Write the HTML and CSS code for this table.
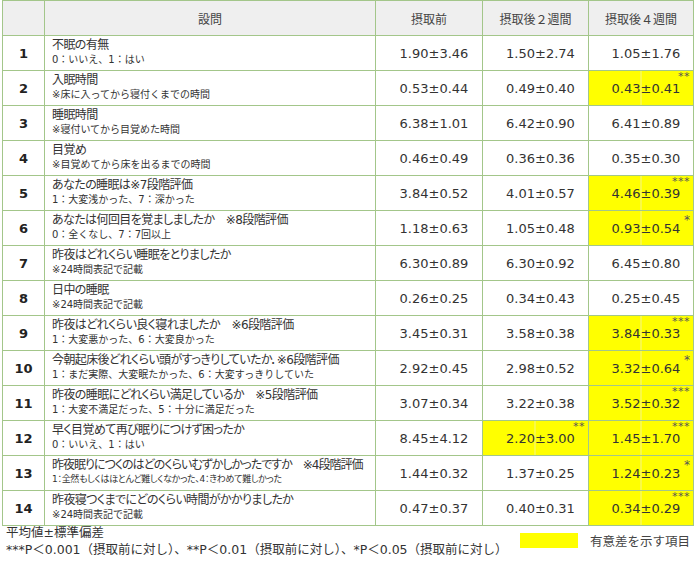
FILE: index.html
```html
<!DOCTYPE html>
<html lang="ja">
<head>
<meta charset="utf-8">
<link rel="stylesheet" href="styles.css">
</head>
<body>
<div class="page">
<table class="tbl">
  <colgroup>
    <col class="c-no"><col class="c-q"><col class="c-v"><col class="c-v2"><col class="c-v3">
  </colgroup>
  <thead>
    <tr><th></th><th>設問</th><th>摂取前</th><th>摂取後２週間</th><th>摂取後４週間</th></tr>
  </thead>
  <tbody>
    <tr><td class="no">1</td><td class="q"><div class="m">不眠の有無</div><div class="s">0：いいえ、1：はい</div></td><td class="v">1.90±3.46</td><td class="v">1.50±2.74</td><td class="v">1.05±1.76</td></tr>
    <tr><td class="no">2</td><td class="q"><div class="m">入眠時間</div><div class="s">※床に入ってから寝付くまでの時間</div></td><td class="v">0.53±0.44</td><td class="v">0.49±0.40</td><td class="v y">0.43±0.41<span class="ast">**</span></td></tr>
    <tr><td class="no">3</td><td class="q"><div class="m">睡眠時間</div><div class="s">※寝付いてから目覚めた時間</div></td><td class="v">6.38±1.01</td><td class="v">6.42±0.90</td><td class="v">6.41±0.89</td></tr>
    <tr><td class="no">4</td><td class="q"><div class="m">目覚め</div><div class="s">※目覚めてから床を出るまでの時間</div></td><td class="v">0.46±0.49</td><td class="v">0.36±0.36</td><td class="v">0.35±0.30</td></tr>
    <tr><td class="no">5</td><td class="q"><div class="m">あなたの睡眠は※7段階評価</div><div class="s">1：大変浅かった、7：深かった</div></td><td class="v">3.84±0.52</td><td class="v">4.01±0.57</td><td class="v y">4.46±0.39<span class="ast">***</span></td></tr>
    <tr><td class="no">6</td><td class="q"><div class="m">あなたは何回目を覚ましましたか　※8段階評価</div><div class="s">0：全くなし、7：7回以上</div></td><td class="v">1.18±0.63</td><td class="v">1.05±0.48</td><td class="v y">0.93±0.54<span class="ast one">*</span></td></tr>
    <tr><td class="no">7</td><td class="q"><div class="m">昨夜はどれくらい睡眠をとりましたか</div><div class="s">※24時間表記で記載</div></td><td class="v">6.30±0.89</td><td class="v">6.30±0.92</td><td class="v">6.45±0.80</td></tr>
    <tr><td class="no">8</td><td class="q"><div class="m">日中の睡眠</div><div class="s">※24時間表記で記載</div></td><td class="v">0.26±0.25</td><td class="v">0.34±0.43</td><td class="v">0.25±0.45</td></tr>
    <tr><td class="no">9</td><td class="q"><div class="m">昨夜はどれくらい良く寝れましたか　※6段階評価</div><div class="s">1：大変悪かった、6：大変良かった</div></td><td class="v">3.45±0.31</td><td class="v">3.58±0.38</td><td class="v y">3.84±0.33<span class="ast">***</span></td></tr>
    <tr><td class="no">10</td><td class="q"><div class="m">今朝起床後どれくらい頭がすっきりしていたか．※6段階評価</div><div class="s">1：まだ実際、大変眠たかった、6：大変すっきりしていた</div></td><td class="v">2.92±0.45</td><td class="v">2.98±0.52</td><td class="v y">3.32±0.64<span class="ast one">*</span></td></tr>
    <tr><td class="no">11</td><td class="q"><div class="m">昨夜の睡眠にどれくらい満足しているか　※5段階評価</div><div class="s">1：大変不満足だった、5：十分に満足だった</div></td><td class="v">3.07±0.34</td><td class="v">3.22±0.38</td><td class="v y">3.52±0.32<span class="ast">***</span></td></tr>
    <tr><td class="no">12</td><td class="q"><div class="m">早く目覚めて再び眠りにつけず困ったか</div><div class="s">0：いいえ、1：はい</div></td><td class="v">8.45±4.12</td><td class="v y">2.20±3.00<span class="ast">**</span></td><td class="v y">1.45±1.70<span class="ast">***</span></td></tr>
    <tr><td class="no">13</td><td class="q"><div class="m tight">昨夜眠りにつくのはどのくらいむずかしかったですか　※4段階評価</div><div class="s small">1：全然もしくはほとんど難しくなかった、4：きわめて難しかった</div></td><td class="v">1.44±0.32</td><td class="v">1.37±0.25</td><td class="v y">1.24±0.23<span class="ast one">*</span></td></tr>
    <tr><td class="no">14</td><td class="q"><div class="m">昨夜寝つくまでにどのくらい時間がかかりましたか</div><div class="s">※24時間表記で記載</div></td><td class="v">0.47±0.37</td><td class="v">0.40±0.31</td><td class="v y">0.34±0.29<span class="ast">***</span></td></tr>
  </tbody>
</table>
<div class="foot">
  <div class="notes">
    <div>平均値±標準偏差</div>
    <div>***P＜0.001（摂取前に対し）、**P＜0.01（摂取前に対し）、*P＜0.05（摂取前に対し）</div>
  </div>
  <div class="legend"><span class="swatch"></span><span class="ltext">有意差を示す項目</span></div>
</div>
</div>
</body>
</html>
```

FILE: styles.css
```css
html, body {
  margin: 0;
  padding: 0;
  background: #ffffff;
}
.page {
  width: 700px;
  padding-left: 2px;
  box-sizing: border-box;
  font-family: "DejaVu Sans", "Noto Sans CJK JP", sans-serif;
  color: #333333;
}
.tbl {
  border-collapse: collapse;
  table-layout: fixed;
  width: 691px;
}
.c-no { width: 42px; }
.c-q { width: 331px; }
.c-v { width: 107px; }
.c-v2 { width: 106px; }
.c-v3 { width: 105px; }
.tbl th, .tbl td {
  border: 1px solid #a3c68a;
  padding: 0;
  height: 34px;
  box-sizing: border-box;
}
.tbl thead tr { height: 35px; }
.tbl tbody tr { height: 35px; }
.tbl th {
  background: #efefef;
  font-family: "Noto Sans CJK JP", sans-serif;
  font-weight: normal;
  font-size: 12px;
  text-align: center;
  color: #444;
}
.no {
  text-align: center;
  font-weight: bold;
  font-size: 13px;
  color: #222;
}
.q {
  padding-left: 7px !important;
  white-space: nowrap;
  overflow: hidden;
}
.m {
  font-size: 12px;
  letter-spacing: -0.6px;
  line-height: 15px;
  color: #333;
  font-feature-settings: "palt";
}
.m.tight {
  letter-spacing: -1px;
}
.s {
  font-size: 10px;
  line-height: 13px;
  color: #333;
  padding-bottom: 2px;
}
.s.small {
  font-size: 9px;
  letter-spacing: -0.3px;
  font-feature-settings: "palt";
}
.v {
  text-align: center;
  padding-left: 10px !important;
  font-size: 13px;
  color: #333;
  position: relative;
}
.y {
  background: linear-gradient(to right, #ffff00 0, #ffff00 calc(50% - 1px), #f4f48a calc(50% - 1px), #f4f48a 50%, #ffff00 50%, #ffff00 100%);
}
.ast {
  position: absolute;
  right: 3px;
  top: 1px;
  font-size: 11px;
  line-height: 9px;
  letter-spacing: 0.5px;
  color: #555;
}
.ast.one {
  top: 5px;
  font-size: 12px;
  letter-spacing: 0;
}
.foot {
  display: flex;
  justify-content: space-between;
  align-items: center;
  width: 691px;
}
.notes {
  font-size: 12.5px;
  line-height: 17px;
  color: #333;
  padding-left: 4px;
  margin-top: -2px;
}
.legend {
  display: flex;
  align-items: center;
  gap: 12px;
  padding-right: 3px;
  margin-top: -4px;
}
.swatch {
  display: inline-block;
  width: 58px;
  height: 15px;
  background: #ffff00;
}
.ltext {
  font-family: "Noto Sans CJK JP", sans-serif;
  font-size: 12.5px;
  color: #444;
}
```
